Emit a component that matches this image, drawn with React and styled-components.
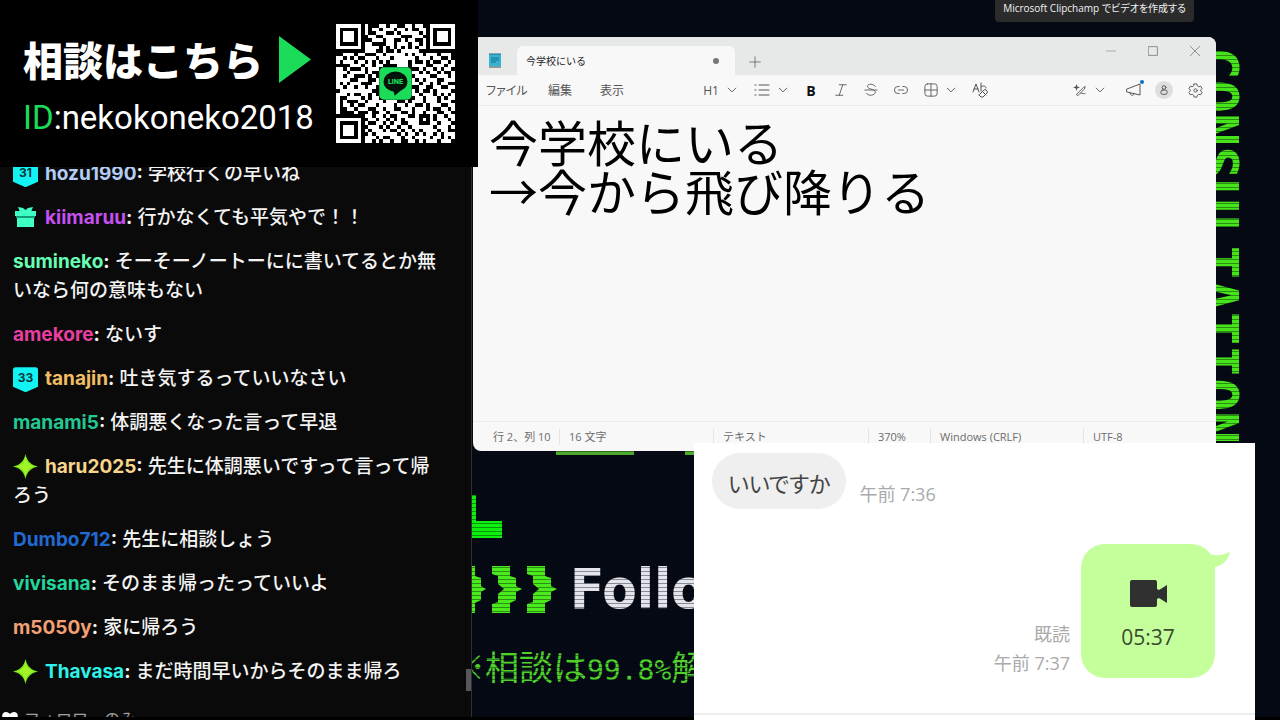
// react
import React from 'react';

// libs
import styled, {createGlobalStyle} from 'styled-components';

const MESSAGES = [
	{name : 'hozu1990', color : '#b4cdf5', badge : '31', text : '学校行くの早いね'},
	{name : 'kiimaruu', color : '#c650f0', badge : 'gift', text : '行かなくても平気やで！！'},
	{
		name  : 'sumineko',
		color : '#66ffb3',
		text  : 'そーそーノートーにに書いてるとか無いなら何の意味もない',
	},
	{name : 'amekore', color : '#e93fa3', text : 'ないす'},
	{name : 'tanajin', color : '#f2bd64', badge : '33', text : '吐き気するっていいなさい'},
	{name : 'manami5', color : '#22c993', text : '体調悪くなった言って早退'},
	{
		name  : 'haru2025',
		color : '#f8d58c',
		badge : 'spark',
		text  : '先生に体調悪いですって言って帰ろう',
	},
	{name : 'Dumbo712', color : '#2269d2', text : '先生に相談しょう'},
	{name : 'vivisana', color : '#22d69c', text : 'そのまま帰ったっていいよ'},
	{name : 'm5050y', color : '#f3a074', text : '家に帰ろう'},
	{name : 'Thavasa', color : '#2bf5ea', badge : 'spark', text : 'まだ時間早いからそのまま帰ろ'},
];

const QR_ROWS = [
	'111111101000110110011011001111111',
	'100000101011011101101001101000001',
	'101110101001110010111110101011101',
	'101110100110011111000111001011101',
	'101110100011101100101100101011101',
	'100000101100001101110110101000001',
	'111111101111010101010101101111111',
	'000000001110010010111110000000000',
	'001110110001101111101011011101110',
	'110101001110111011111101110110010',
	'101110110101010111110100101001101',
	'000011101101100001110111100111011',
	'110100010111000000000001011010110',
	'111011110100000000000110101101001',
	'110110001010000000000011110011101',
	'111100111001000000000101011100111',
	'101011100011000000000110110101100',
	'110110110110000000000001100110011',
	'011111111100000000000101001011110',
	'111010011010000000000110111010101',
	'100111101011000000000011011101011',
	'101000110111101110010111011101110',
	'101101001110111101101100101110011',
	'100110111001101100111011101001101',
	'100001000100110111001011011100110',
	'000000001101101001110010001011011',
	'111111100110110101011110101011101',
	'100000101001101011001110001101110',
	'101110100111010110110111111011101',
	'101110101011101001011010111101100',
	'101110100101111110101101011010111',
	'100000101110100111011011110110101',
	'111111101101011011001101011101110',
];

const STATUS = ['行 2、列 10', '16 文字', 'テキスト', '370%', 'Windows (CRLF)', 'UTF-8'];

function QrCode() {
	return (
		<QrSvg viewBox="0 0 33 33" role="img" aria-label="QR">
			<g fill="#fff" shapeRendering="crispEdges">
				{QR_ROWS.map((row, y) =>
					[...row].map((cell, x) =>
						cell === '1' ? <rect key={`${x}-${y}`} x={x} y={y} width="1" height="1" /> : null,
					),
				)}
			</g>
			<rect x="12" y="12" width="9" height="9" rx="1.3" fill="#1bdc58" />
			<ellipse cx="16.5" cy="16" rx="3.3" ry="2.8" fill="#04140a" />
			<path d="M15.8 18.2h2.4l-1.9 1.7z" fill="#04140a" />
			<text
				x="16.5"
				y="16.7"
				textAnchor="middle"
				fontFamily="Inter, sans-serif"
				fontWeight="800"
				fontSize="1.9"
				fill="#1bdc58"
			>
				LINE
			</text>
		</QrSvg>
	);
}

function Badge({kind}) {
	if (kind === 'gift') {
		return (
			<BadgeSvg viewBox="0 0 25 25">
				<g fill="#3effc4">
					<path d="M5 2l5 1 2.500 2L15 3l5-1-2 5H7z" />
					<path d="M2 6h21v5H2z" />
					<path d="M4 12h17v10H4z" />
				</g>
				<path d="M3 11h19v2H3z" fill="#159a78" />
			</BadgeSvg>
		);
	}
	if (kind === 'spark') {
		return (
			<BadgeSvg viewBox="0 0 25 25">
				<path
					d="M12.500 0C14 7 18 11 25 12.500 18 14 14 18 12.500 25 11 18 7 14 0 12.500 7 11 11 7 12.500 0z"
					fill="#78e61e"
				/>
				<path d="M12.500 3C14 9 16 11 22 12.500 16 14 14 16 12.500 22 11 16 9 14 3 12.500 9 11 11 9 12.500 3z" fill="#a2f328" />
			</BadgeSvg>
		);
	}
	return <Shield>{kind}</Shield>;
}

function Icon({size = 16, children, width = 1}) {
	return (
		<svg
			width={size}
			height={size}
			viewBox="0 0 16 16"
			fill="none"
			stroke="currentColor"
			strokeWidth={width}
			strokeLinecap="round"
			strokeLinejoin="round"
			aria-hidden="true"
		>
			{children}
		</svg>
	);
}

function Chevron() {
	return (
		<Icon size={10}>
			<path d="M2 5l6 6 6-6" strokeWidth="1.500" />
		</Icon>
	);
}

function Sidebar() {
	return (
		<Aside>
			<Banner>
				<Contact>
					<Lead>
						相談はこちら
						<svg width="32" height="47" viewBox="0 0 32 47" aria-hidden="true">
							<path d="M0 0l32 23.500L0 47z" fill="#1bdc58" />
						</svg>
					</Lead>
					<LineId>
						<b>ID</b>:nekokoneko2018
					</LineId>
				</Contact>
				<QrCode />
			</Banner>
			<Log>
				{MESSAGES.map(({name, color, badge, text}) => (
					<Message key={name}>
						{badge && <Badge kind={badge} />}
						<Name $color={color}>{name}</Name>
						<b>:</b> {text}
					</Message>
				))}
				<Thumb />
			</Log>
			<Mode>
				<svg width="16" height="16" viewBox="0 0 16 16" aria-hidden="true">
					<path d="M8 15L1 8C-1 4 1 1 4 1c2 0 3 1 4 2 1-1 2-2 4-2 3 0 5 3 3 7z" fill="#fff" />
				</svg>
				フォロワーのみ
			</Mode>
		</Aside>
	);
}

function Wallpaper() {
	return (
		<Art>
			<Vertical>CONSULTATION</Vertical>
			<Shapes viewBox="0 0 230 300" aria-hidden="true">
				<path d="M84 30h78v4H84zM213 30h17v4h-17z" fill="#4cab2c" />
				<path d="M0 74h4v26h26v17H0z" fill="#0df00d" />
				<g fill="#4aea1c">
					<path d="M0 145h3v10l6 2v8l5 3-5 3v8l-6 3v10H0z" />
					<path d="M20 145h18v10l6 2v8l6 3-6 3v8l-6 3v10H20v-9l6-2v-8l6-5-6-5v-8l-6-2z" />
					<path d="M55 145h18v10l6 2v8l6 3-6 3v8l-6 3v10H55v-9l6-2v-8l6-5-6-5v-8l-6-2z" />
				</g>
			</Shapes>
			<Follow>Follow</Follow>
			<Note>
				※相談は<span>99.8%</span>解
			</Note>
			<Scanlines />
		</Art>
	);
}

function Notepad() {
	return (
		<Window>
			<TitleBar>
				<AppIcon viewBox="0 0 14 16" aria-hidden="true">
					<path d="M1 2h12v13H1z" fill="#35b3d1" />
					<path d="M1 14h12v2H1z" fill="#8c9a9f" />
					<path d="M2 1v2M4 1v2M6 1v2M8 1v2M10 1v2M12 1v2" stroke="#246b86" />
					<path d="M3 6h8M3 8h8M3 10h5" stroke="#14718f" />
				</AppIcon>
				<Tab>
					今学校にいる
					<i />
				</Tab>
				<IconButton aria-label="新しいタブ" $w={40}>
					<Icon size={12}>
						<path d="M8 1v14M1 8h14" />
					</Icon>
				</IconButton>
				<Caption>
					<IconButton aria-label="最小化" $w={42}>
						<Icon size={10}>
							<path d="M0 8h16" />
						</Icon>
					</IconButton>
					<IconButton aria-label="最大化" $w={42}>
						<Icon size={10}>
							<path d="M1 1h14v14H1z" strokeWidth="1.500" />
						</Icon>
					</IconButton>
					<IconButton aria-label="閉じる" $w={42}>
						<Icon size={10}>
							<path d="M0 0l16 16M16 0L0 16" strokeWidth="1.500" />
						</Icon>
					</IconButton>
				</Caption>
			</TitleBar>
			<Toolbar>
				<Menus>
					<button>ファイル</button>
					<button>編集</button>
					<button>表示</button>
				</Menus>
				<Tools>
					<IconButton aria-label="見出し" $w={52}>
						<span>H1</span>
						<Chevron />
					</IconButton>
					<IconButton aria-label="リスト" $w={50}>
						<Icon>
							<path d="M1 3h1M1 8h1M1 13h1M5 3h10M5 8h10M5 13h10" />
						</Icon>
						<Chevron />
					</IconButton>
					<IconButton aria-label="太字" $w={30}>
						<Strong>B</Strong>
					</IconButton>
					<IconButton aria-label="斜体" $w={30}>
						<Icon size={14}>
							<path d="M6 2h8M2 14h8M10 2L6 14" />
						</Icon>
					</IconButton>
					<IconButton aria-label="取り消し線" $w={30}>
						<Icon size={14}>
							<path d="M13 4c-1-3-9-4-9 0 0 3 8 3 9 6 0 5-9 5-10 2M1 8h14" />
						</Icon>
					</IconButton>
					<IconButton aria-label="リンク" $w={30}>
						<Icon size={14}>
							<path d="M6 4H4.500a4 4 0 000 8H6M10 4h1.500a4 4 0 010 8H10M5 8h6" />
						</Icon>
					</IconButton>
					<IconButton aria-label="表" $w={48}>
						<Icon size={14}>
							<rect x="1" y="1" width="14" height="14" rx="3" />
							<path d="M8 1v14M1 8h14" />
						</Icon>
						<Chevron />
					</IconButton>
					<IconButton aria-label="書式のクリア" $w={32}>
						<Icon size={16}>
							<path d="M1 10L4 2l3 8M2 7h4M9 1v8M9 5c2-2 5-1 5 1M8 12l4-4q1-1 2 0l1 1q1 1 0 2l-4 4H9l-2-2zM10 9l4 4" />
						</Icon>
					</IconButton>
				</Tools>
				<Extras>
					<IconButton aria-label="書き換え" $w={58}>
						<Icon size={14}>
							<path d="M4 1l1 3 3 1-3 1-1 3-1-3-3-1 3-1z" fill="currentColor" stroke="none" />
							<path d="M4 13l8-8 2-1-1 3-7 7zM9 12c2-2 3 2 5 0" />
						</Icon>
						<Chevron />
					</IconButton>
					<IconButton aria-label="お知らせ" $w={32}>
						<Icon>
							<path d="M1 7l13-5v11L1 10zM4 11c0 3 4 3 4 1" />
						</Icon>
						<Dot />
					</IconButton>
					<Avatar aria-label="アカウント">
						<Icon size={10} width={1.5}>
							<circle cx="8" cy="4" r="3" />
							<rect x="3" y="8" width="10" height="7" rx="3" />
						</Icon>
					</Avatar>
					<IconButton aria-label="設定" $w={30}>
						<Icon size={15}>
							<path d="M6.500 1h3l.5 2 1.500 1 2-.6 1.500 2.600L13.500 7.500v1L15 10l-1.500 2.600-2-.6-1.500 1-.5 2h-3L6 13l-1.500-1-2 .6L1 10l1.500-1.500v-1L1 6l1.500-2.600 2 .6L6 3z" />
							<circle cx="8" cy="8" r="1.800" />
						</Icon>
					</IconButton>
				</Extras>
			</Toolbar>
			<Editor
				aria-label="本文"
				spellCheck={false}
				defaultValue={'今学校にいる\n→今から飛び降りる'}
			/>
			<StatusBar>
				{STATUS.map((label) => (
					<span key={label}>{label}</span>
				))}
			</StatusBar>
		</Window>
	);
}

function Chat() {
	return (
		<ChatPanel>
			<Incoming>
				<Bubble>いいですか</Bubble>
				<Stamp>午前 7:36</Stamp>
			</Incoming>
			<Outgoing>
				<Stamp>
					既読
					<br />
					午前 7:37
				</Stamp>
				<Call>
					<svg width="37" height="27" viewBox="0 0 37 27" aria-hidden="true">
						<path
							d="M2 0h23q2 0 2 2v7l2 1 8-5v18l-8-5-2 1v6q0 2-2 2H2q-2 0-2-2V2q0-2 2-2z"
							fill="#303030"
						/>
					</svg>
					05:37
					<Tail viewBox="0 0 26 20" aria-hidden="true">
						<path d="M0 2c8 6 17 5 26 1-2 9-8 14-19 16z" fill="#c5ff9c" />
					</Tail>
				</Call>
			</Outgoing>
			<Compose />
		</ChatPanel>
	);
}

export default function App() {
	return (
		<Screen>
			<GlobalStyle />
			<Sidebar />
			<Stage>
				<Wallpaper />
				<Tip>Microsoft Clipchamp でビデオを作成する</Tip>
				<Notepad />
				<Chat />
			</Stage>
		</Screen>
	);
}

const GlobalStyle = createGlobalStyle`
	* {
		box-sizing: border-box;
	}

	body {
		margin: 0;
		background: #000;
		font-family: 'Open Sans', 'Noto Sans CJK JP', sans-serif;
	}

	button {
		padding: 0;
		border: 0;
		background: none;
		color: inherit;
		font: inherit;
	}
`;

const Screen = styled.div`
	display: grid;
	grid-template-columns: 472px 1fr;

	height: 100vh;
	padding-bottom: 3px;
	overflow: hidden;
`;

// sidebar
const Aside = styled.aside`
	display: flex;
	flex-direction: column;

	min-height: 0;
	border-right: 1px solid #2e3033;
	background: #0a0a0a;
`;

const Banner = styled.header`
	position: relative;
	z-index: 2;
	display: flex;
	justify-content: space-between;
	align-items: center;

	height: 167px;
	margin-right: -7px;
	padding: 0 23px;
	background: #000;
	color: #fff;
`;

const Contact = styled.div`
	padding-top: 9px;
`;

const QrSvg = styled.svg`
	flex: none;

	width: 119px;
	height: 119px;
`;

const Lead = styled.div`
	display: flex;
	align-items: center;
	gap: 16px;

	font: 900 40px/60px 'Noto Sans CJK JP', sans-serif;
	white-space: nowrap;
`;

const LineId = styled.div`
	font: 33px/58px Roboto, 'Liberation Sans', sans-serif;
	white-space: nowrap;

	b {
		color: #1bdc58;
		font-weight: 400;
	}
`;

const Log = styled.ul`
	position: relative;
	display: flex;
	flex: 1;
	flex-direction: column;
	justify-content: flex-end;
	gap: 15px;

	min-height: 0;
	margin: 0;
	padding: 0 24px 7px 13px;
	overflow: hidden;
	list-style: none;
`;

const Message = styled.li`
	color: #f4f4f4;
	font: 500 19px/29px Inter, 'Noto Sans CJK JP', sans-serif;

	b {
		font-weight: 700;
	}
`;

const Name = styled.b`
	color: ${({$color}) => $color};
`;

const BadgeSvg = styled.svg`
	width: 25px;
	height: 25px;
	margin-right: 7px;
	vertical-align: -6px;
`;

const Shield = styled.span`
	display: inline-block;

	width: 25px;
	height: 25px;
	margin-right: 7px;
	border-radius: 3px;
	background: #12f3f3;
	clip-path: polygon(0 0, 100% 0, 100% 78%, 50% 100%, 0 78%);
	color: #06393c;
	font-size: 12px;
	font-weight: 700;
	line-height: 22px;
	text-align: center;
	vertical-align: middle;
`;

const Thumb = styled.div`
	position: absolute;
	right: 0;
	bottom: 2px;

	width: 5px;
	height: 22px;
	background: #58585a;
`;

const Mode = styled.div`
	display: flex;
	gap: 6px;

	height: 24px;
	padding: 15px 0 0 2px;
	overflow: hidden;
	color: #a0a0a0;
	font: 16px/20px 'Noto Sans CJK JP', sans-serif;

	svg {
		flex: none;
		margin-top: 3px;
	}
`;

// wallpaper
const Stage = styled.main`
	position: relative;

	min-width: 0;
	background: #050a15;
`;

const Art = styled.div`
	position: absolute;
	inset: 0;

	overflow: hidden;
`;

const Vertical = styled.div`
	position: absolute;
	top: 47px;
	right: 30px;

	color: #48e41b;
	font: 700 55px/64px 'DejaVu Sans Mono', monospace;
	writing-mode: vertical-rl;
`;

const Shapes = styled.svg`
	position: absolute;
	top: 421px;
	left: 0;

	width: 230px;
	height: 300px;
`;

const Follow = styled.div`
	position: absolute;
	top: 556px;
	left: 98px;

	color: #e4e4ec;
	font: 700 56px/66px 'DejaVu Sans Condensed', 'Open Sans', sans-serif;
`;

const Note = styled.div`
	position: absolute;
	top: 644px;
	left: -21px;

	color: #4ed22a;
	font: 34px/44px 'Noto Sans CJK JP', sans-serif;
	white-space: nowrap;

	span {
		font-family: 'DejaVu Sans Mono', monospace;
		font-size: 28px;
	}
`;

const Scanlines = styled.div`
	position: absolute;
	inset: 0;

	background: repeating-linear-gradient(
		transparent 0 3px,
		rgba(0, 5, 12, 0.4) 3px 4px
	);
`;

const Tip = styled.div`
	position: absolute;
	top: 0;
	right: 86px;

	padding: 0 8px 6px;
	border-radius: 0 0 4px 4px;
	background: #2b2b2b;
	color: #f2f2f2;
	font-feature-settings: 'palt';
	font-size: 10px;
	line-height: 16px;
	white-space: nowrap;
`;

// notepad
const Window = styled.section`
	position: absolute;
	top: 37px;
	right: 64px;
	left: 1px;
	display: flex;
	flex-direction: column;

	height: 414px;
	border-radius: 8px;
	background: #f8f8f8;
	color: #555;
	overflow: hidden;
`;

const TitleBar = styled.div`
	display: flex;
	align-items: flex-end;

	height: 38px;
	background: #e7e8e8;
`;

const AppIcon = styled.svg`
	width: 14px;
	height: 16px;
	margin: 0 15px 7px;
`;

const Tab = styled.div`
	display: flex;
	align-items: center;
	justify-content: space-between;

	width: 218px;
	height: 29px;
	padding: 0 16px 0 9px;
	border-radius: 6px 6px 0 0;
	background: #f8f8f8;
	color: #222;
	font-size: 10px;

	i {
		width: 6px;
		height: 6px;
		border-radius: 50%;
		background: #777;
	}
`;

const IconButton = styled.button`
	position: relative;
	display: flex;
	flex: none;
	align-items: center;
	justify-content: center;
	gap: 8px;

	width: ${({$w}) => $w}px;
	height: 27px;
	font-size: 12px;
`;

const Caption = styled.div`
	display: flex;
	align-self: flex-start;

	margin-left: auto;
	color: #888;
`;

const Toolbar = styled.div`
	display: flex;
	align-items: center;

	height: 31px;
	padding: 0 6px 0 13px;
	border-bottom: 1px solid #ececec;
`;

const Menus = styled.div`
	display: grid;
	grid-template-columns: 62px 52px 92px;

	font-size: 12px;

	button {
		justify-self: start;
		font-feature-settings: 'palt';
		white-space: nowrap;
	}
`;

const Tools = styled.div`
	display: flex;

	margin-left: 2px;
`;

const Strong = styled.span`
	color: #111;
	font-size: 14px;
	font-weight: 700;
`;

const Extras = styled.div`
	display: flex;
	align-items: center;

	margin-left: auto;
`;

const Dot = styled.span`
	position: absolute;
	top: 3px;
	right: 6px;

	width: 4px;
	height: 4px;
	border-radius: 50%;
	background: #0a6fc2;
`;

const Avatar = styled.button`
	display: flex;
	align-items: center;
	justify-content: center;

	width: 18px;
	height: 18px;
	margin: 0 7px 0 5px;
	border-radius: 50%;
	background: #dedede;
`;

const Editor = styled.textarea`
	flex: 1;

	min-height: 0;
	padding: 10px 16px;
	border: 0;
	outline: 0;
	background: transparent;
	color: #000;
	font: 49px/49px 'Noto Sans CJK JP', sans-serif;
	overflow: hidden;
	resize: none;
`;

const StatusBar = styled.footer`
	display: grid;
	grid-template-columns: 87px 154px 155px 62px 153px 1fr;
	align-items: center;

	height: 30px;
	border-top: 1px solid #ebebeb;
	color: #6c6c6c;
	font-size: 11px;
	line-height: 16px;

	span {
		padding-left: 9px;
		border-right: 1px solid #e4e4e4;
		white-space: nowrap;
	}

	span:first-child {
		padding-left: 20px;
	}

	span:last-child {
		border: 0;
	}
`;

// chat window
const ChatPanel = styled.section`
	position: absolute;
	top: 443px;
	right: 25px;
	bottom: -3px;
	left: 222px;
	display: flex;
	flex-direction: column;

	padding-top: 10px;
	background: #fff;
`;

const Incoming = styled.div`
	display: flex;
	align-items: flex-end;
	gap: 13px;

	padding-left: 18px;
`;

const Bubble = styled.div`
	padding: 4px 16px 0;
	border-radius: 28px;
	background: #efefef;
	color: #444;
	font-feature-settings: 'palt';
	font-size: 22px;
	line-height: 52px;
`;

const Stamp = styled.div`
	color: #aaa;
	font-size: 18px;
	line-height: 29px;
	text-align: right;
`;

const Outgoing = styled.div`
	display: flex;
	align-items: flex-end;
	justify-content: flex-end;
	gap: 11px;

	margin-top: 35px;
	padding-right: 40px;
`;

const Call = styled.div`
	position: relative;
	display: flex;
	flex-direction: column;
	align-items: center;
	gap: 16px;

	width: 134px;
	height: 134px;
	padding-top: 36px;
	border-radius: 24px;
	background: #c5ff9c;
	color: #3a4a30;
	font-size: 21px;
	line-height: 28px;
`;

const Tail = styled.svg`
	position: absolute;
	top: 5px;
	right: -15px;

	width: 26px;
	height: 20px;
`;

const Compose = styled.div`
	height: 7px;
	margin-top: auto;
	border-top: 2px solid #eee;
`;
